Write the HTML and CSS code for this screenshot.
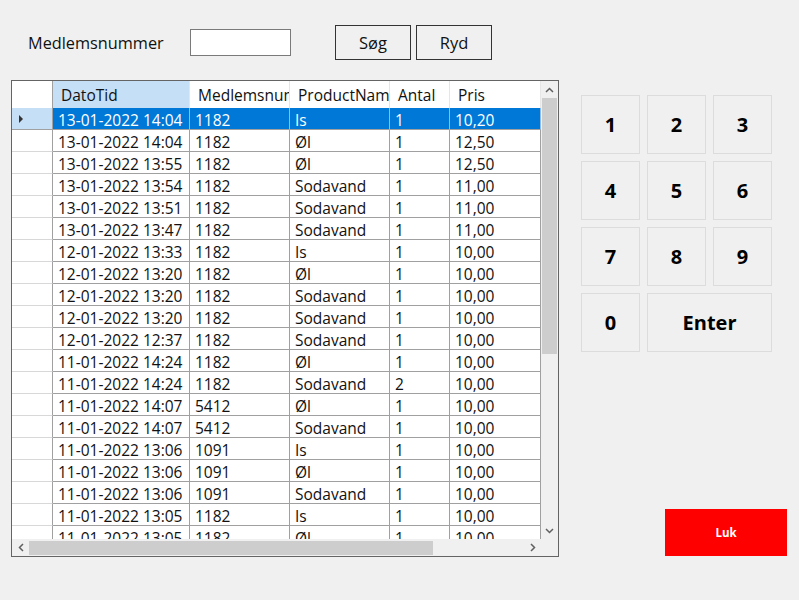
FILE: index.html
```html
<!DOCTYPE html>
<html lang="da">
<head>
<meta charset="utf-8">
<title>Medlemskøb</title>
<link rel="stylesheet" href="styles.css">
</head>
<body>
<div class="app">
  <div class="toolbar">
    <span class="label">Medlemsnummer</span>
    <input class="search-input" type="text">
    <button class="btn btn-sog">Søg</button>
    <button class="btn btn-ryd">Ryd</button>
  </div>
  <div class="main">
    <div class="datagrid">
      <div class="viewport">
        <div class="row head">
          <div class="cell rh"></div>
          <div class="cell active">DatoTid</div>
          <div class="cell">Medlemsnummer</div>
          <div class="cell">ProductName</div>
          <div class="cell">Antal</div>
          <div class="cell">Pris</div>
        </div>
        <div class="row sel">
          <div class="cell rh"><span class="tri"></span></div>
          <div class="cell">13-01-2022 14:04</div><div class="cell">1182</div><div class="cell">Is</div><div class="cell">1</div><div class="cell">10,20</div>
        </div>
        <div class="row"><div class="cell rh"></div><div class="cell">13-01-2022 14:04</div><div class="cell">1182</div><div class="cell">Øl</div><div class="cell">1</div><div class="cell">12,50</div></div>
        <div class="row"><div class="cell rh"></div><div class="cell">13-01-2022 13:55</div><div class="cell">1182</div><div class="cell">Øl</div><div class="cell">1</div><div class="cell">12,50</div></div>
        <div class="row"><div class="cell rh"></div><div class="cell">13-01-2022 13:54</div><div class="cell">1182</div><div class="cell">Sodavand</div><div class="cell">1</div><div class="cell">11,00</div></div>
        <div class="row"><div class="cell rh"></div><div class="cell">13-01-2022 13:51</div><div class="cell">1182</div><div class="cell">Sodavand</div><div class="cell">1</div><div class="cell">11,00</div></div>
        <div class="row"><div class="cell rh"></div><div class="cell">13-01-2022 13:47</div><div class="cell">1182</div><div class="cell">Sodavand</div><div class="cell">1</div><div class="cell">11,00</div></div>
        <div class="row"><div class="cell rh"></div><div class="cell">12-01-2022 13:33</div><div class="cell">1182</div><div class="cell">Is</div><div class="cell">1</div><div class="cell">10,00</div></div>
        <div class="row"><div class="cell rh"></div><div class="cell">12-01-2022 13:20</div><div class="cell">1182</div><div class="cell">Øl</div><div class="cell">1</div><div class="cell">10,00</div></div>
        <div class="row"><div class="cell rh"></div><div class="cell">12-01-2022 13:20</div><div class="cell">1182</div><div class="cell">Sodavand</div><div class="cell">1</div><div class="cell">10,00</div></div>
        <div class="row"><div class="cell rh"></div><div class="cell">12-01-2022 13:20</div><div class="cell">1182</div><div class="cell">Sodavand</div><div class="cell">1</div><div class="cell">10,00</div></div>
        <div class="row"><div class="cell rh"></div><div class="cell">12-01-2022 12:37</div><div class="cell">1182</div><div class="cell">Sodavand</div><div class="cell">1</div><div class="cell">10,00</div></div>
        <div class="row"><div class="cell rh"></div><div class="cell">11-01-2022 14:24</div><div class="cell">1182</div><div class="cell">Øl</div><div class="cell">1</div><div class="cell">10,00</div></div>
        <div class="row"><div class="cell rh"></div><div class="cell">11-01-2022 14:24</div><div class="cell">1182</div><div class="cell">Sodavand</div><div class="cell">2</div><div class="cell">10,00</div></div>
        <div class="row"><div class="cell rh"></div><div class="cell">11-01-2022 14:07</div><div class="cell">5412</div><div class="cell">Øl</div><div class="cell">1</div><div class="cell">10,00</div></div>
        <div class="row"><div class="cell rh"></div><div class="cell">11-01-2022 14:07</div><div class="cell">5412</div><div class="cell">Sodavand</div><div class="cell">1</div><div class="cell">10,00</div></div>
        <div class="row"><div class="cell rh"></div><div class="cell">11-01-2022 13:06</div><div class="cell">1091</div><div class="cell">Is</div><div class="cell">1</div><div class="cell">10,00</div></div>
        <div class="row"><div class="cell rh"></div><div class="cell">11-01-2022 13:06</div><div class="cell">1091</div><div class="cell">Øl</div><div class="cell">1</div><div class="cell">10,00</div></div>
        <div class="row"><div class="cell rh"></div><div class="cell">11-01-2022 13:06</div><div class="cell">1091</div><div class="cell">Sodavand</div><div class="cell">1</div><div class="cell">10,00</div></div>
        <div class="row"><div class="cell rh"></div><div class="cell">11-01-2022 13:05</div><div class="cell">1182</div><div class="cell">Is</div><div class="cell">1</div><div class="cell">10,00</div></div>
        <div class="row"><div class="cell rh"></div><div class="cell">11-01-2022 13:05</div><div class="cell">1182</div><div class="cell">Øl</div><div class="cell">1</div><div class="cell">10,00</div></div>
      </div>
      <div class="vscroll">
        <div class="arrow"><svg width="9" height="6" viewBox="0 0 9 6"><polyline points="1,5 4.5,1.5 8,5" fill="none" stroke="#606060" stroke-width="1.5"/></svg></div>
        <div class="vthumb"></div>
        <div class="arrow arrow-end"><svg width="9" height="6" viewBox="0 0 9 6"><polyline points="1,1 4.5,4.5 8,1" fill="none" stroke="#606060" stroke-width="1.5"/></svg></div>
      </div>
      <div class="hscroll">
        <div class="harrow"><svg width="6" height="9" viewBox="0 0 6 9"><polyline points="5,1 1.5,4.5 5,8" fill="none" stroke="#606060" stroke-width="1.5"/></svg></div>
        <div class="hthumb"></div>
        <div class="harrow harrow-end"><svg width="6" height="9" viewBox="0 0 6 9"><polyline points="1,1 4.5,4.5 1,8" fill="none" stroke="#606060" stroke-width="1.5"/></svg></div>
      </div>
      <div class="corner"></div>
    </div>
    <div class="side">
      <div class="keypad">
        <button class="key">1</button>
        <button class="key">2</button>
        <button class="key">3</button>
        <button class="key">4</button>
        <button class="key">5</button>
        <button class="key">6</button>
        <button class="key">7</button>
        <button class="key">8</button>
        <button class="key">9</button>
        <button class="key">0</button>
        <button class="key key-enter">Enter</button>
      </div>
      <button class="luk">Luk</button>
    </div>
  </div>
</div>
</body>
</html>
```
FILE: styles.css
```css
* { box-sizing: border-box; }

body {
  margin: 0;
  background: #f0f0f0;
  font-family: "Open Sans", "DejaVu Sans", sans-serif;
  color: #000;
}

.app {
  width: 799px;
  height: 600px;
  overflow: hidden;
}

.toolbar {
  display: flex;
  align-items: center;
  height: 35px;
  margin-top: 25px;
  padding-left: 28px;
}

.label {
  width: 162px;
  font-size: 16.3px;
  color: #111;
}

.search-input {
  width: 101px;
  height: 27px;
  margin: 0;
  border: 1px solid #7a7a7a;
  background: #fff;
  padding: 0;
}

.btn {
  width: 76px;
  height: 35px;
  padding: 0;
  border: 1px solid #333;
  background: #f0f0f0;
  font-family: inherit;
  font-size: 16.5px;
  color: #111;
}

.btn-sog { margin-left: 44px; }
.btn-ryd { margin-left: 5px; }

.main {
  display: flex;
  align-items: flex-start;
  margin-top: 20px;
  padding-left: 11px;
}

.datagrid {
  width: 548px;
  height: 477px;
  border: 1px solid #646464;
  background: #fff;
  display: grid;
  grid-template-columns: 529px 17px;
  grid-template-rows: 458px 17px;
}

.viewport {
  overflow: hidden;
}

.row {
  display: grid;
  grid-template-columns: 41px 137px 100px 100px 60px 91px;
  height: 22px;
}

.cell {
  border-right: 1px solid #a0a0a0;
  border-bottom: 1px solid #a0a0a0;
  padding-left: 5px;
  padding-top: 4px;
  font-size: 15.5px;
  line-height: 17px;
  white-space: nowrap;
  overflow: hidden;
  color: #111;
}

.cell.rh {
  border-bottom-color: #d8d8d8;
  padding-left: 0;
}

.row.head {
  height: 27px;
}

.row.head .cell {
  border-bottom: none;
  border-right: 1px solid #e6e6e6;
  padding-left: 8px;
  padding-top: 1px;
  font-size: 15.5px;
  line-height: 26px;
  background: #fff;
}

.row.head .cell.rh {
  border-right: 1px solid #a0a0a0;
}

.row.head .cell.active {
  background: #c4dff6;
}

.row.sel .cell {
  background: #0078d7;
  color: #fff;
  border-right-color: #8fbde8;
}

.row.sel .cell.rh {
  background: #c4dff6;
  border-right-color: #a0a0a0;
  border-bottom-color: #a0a0a0;
  display: flex;
  align-items: center;
  padding-top: 0;
  padding-left: 7px;
}

.tri {
  width: 0;
  height: 0;
  border-top: 4px solid transparent;
  border-bottom: 4px solid transparent;
  border-left: 4px solid #333;
}

.vscroll {
  background: #f0f0f0;
  display: flex;
  flex-direction: column;
  align-items: center;
}

.arrow {
  width: 100%;
  height: 17px;
  display: flex;
  align-items: center;
  justify-content: center;
  flex: none;
}

.arrow-end { margin-top: auto; }

.vthumb {
  width: 15px;
  height: 256px;
  background: #cdcdcd;
}

.hscroll {
  background: #f0f0f0;
  display: flex;
  align-items: center;
}

.harrow {
  width: 17px;
  height: 17px;
  display: flex;
  align-items: center;
  justify-content: center;
  flex: none;
}

.harrow-end { margin-left: auto; }

.hthumb {
  width: 404px;
  height: 14px;
  background: #cdcdcd;
}

.corner {
  background: #f0f0f0;
}

.side {
  margin-left: 22px;
  padding-top: 15px;
  display: flex;
  flex-direction: column;
  align-items: flex-start;
}

.keypad {
  display: grid;
  grid-template-columns: repeat(3, 59px);
  grid-auto-rows: 59px;
  gap: 7px;
}

.key {
  padding: 0;
  border: 1px solid #dcdcdc;
  background: #f0f0f0;
  font-family: "Open Sans", "DejaVu Sans", sans-serif;
  font-weight: 700;
  font-size: 20px;
  color: #000;
}

.key-enter {
  grid-column: span 2;
}

.luk {
  margin-top: 157px;
  margin-left: 84px;
  width: 122px;
  height: 47px;
  padding: 0;
  border: none;
  background: #ff0000;
  color: #fff;
  font-family: "Open Sans", "DejaVu Sans", sans-serif;
  font-weight: 700;
  font-size: 11.5px;
}
```
